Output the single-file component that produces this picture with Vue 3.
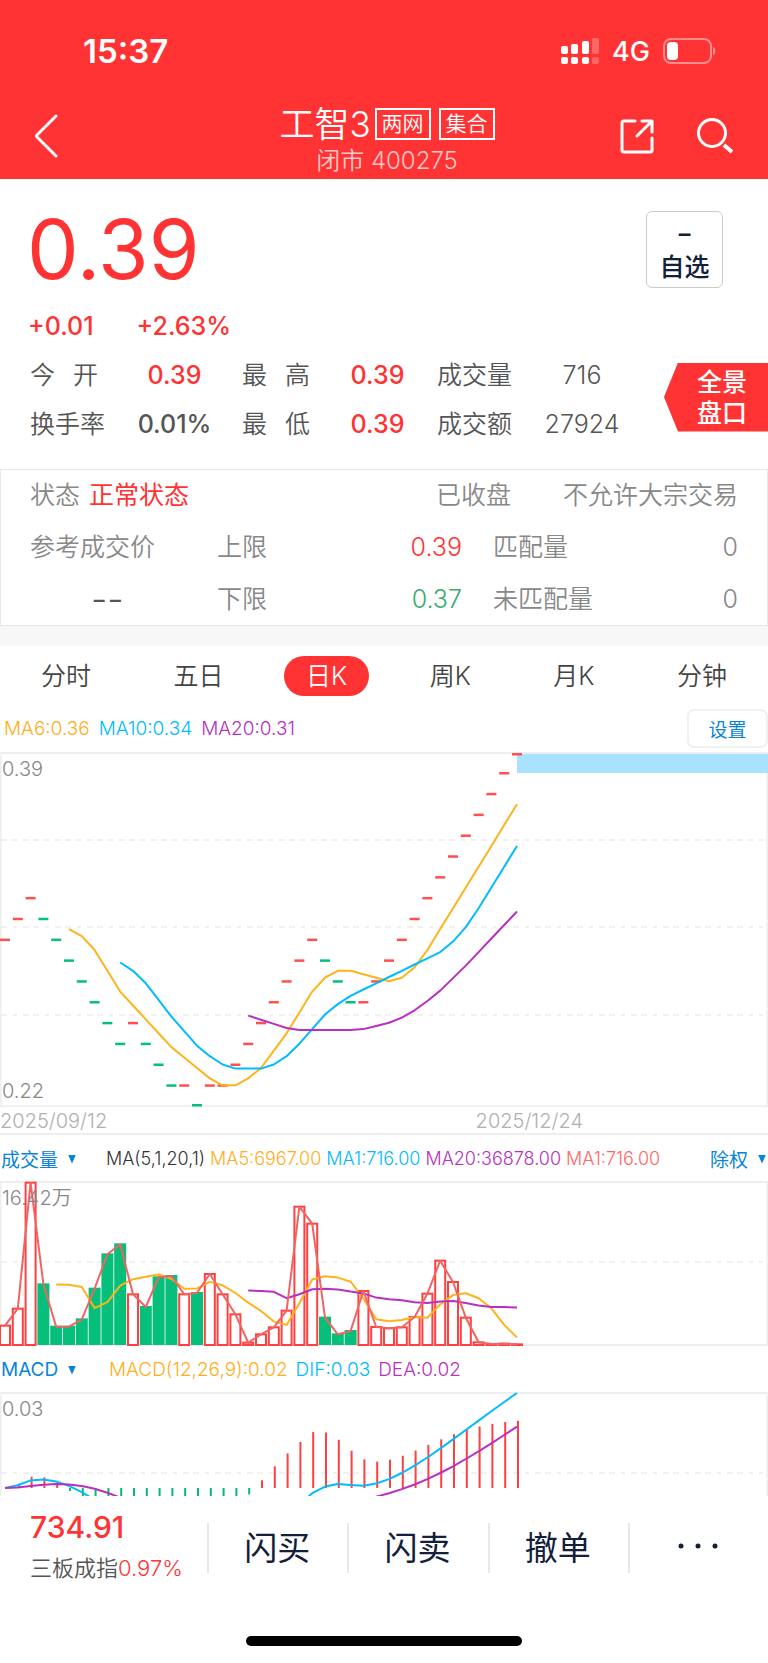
<script setup>
const STEP = 12.8
const x = (i) => 5 + STEP * i

const closes = [
  0.3, 0.31, 0.32, 0.31, 0.3, 0.29, 0.28, 0.27, 0.26, 0.25, 0.26, 0.25, 0.24, 0.23, 0.23, 0.22, 0.23, 0.23, 0.24, 0.25,
  0.26, 0.27, 0.28, 0.29, 0.3, 0.29, 0.28, 0.27, 0.27, 0.28, 0.29, 0.3, 0.31, 0.32, 0.33, 0.34, 0.35, 0.36, 0.37, 0.38, 0.39,
]
const fallingDays = new Set([3, 4, 5, 6, 7, 8, 9, 11, 12, 13, 15, 25, 26, 27])

const movingAverage = (data, n) =>
  data.map((_, i) => (i < n - 1 ? null : data.slice(i - n + 1, i + 1).reduce((a, b) => a + b, 0) / n))
const toPoints = (data, y) =>
  data
    .map((v, i) => (v === null ? null : `${x(i).toFixed(1)},${y(v).toFixed(1)}`))
    .filter(Boolean)
    .join(' ')

// Daily price
const priceY = (v) => Math.min(353, Math.max(2, 21 + (0.38 - v) * 2082))
const candles = closes.map((v, i) => ({ x: x(i) - 5, y: priceY(v) - 1, down: fallingDays.has(i) }))
const ma6 = toPoints(movingAverage(closes, 6), priceY)
const ma10 = toPoints(movingAverage(closes, 10), priceY)
const ma20 = toPoints(movingAverage(closes, 20), priceY)

// Volume
const volumes = [
  58, 109, 487, 182, 55, 55, 77, 169, 272, 302, 152, 114, 203, 207, 152, 156, 213, 152, 92, 7, 32, 53, 103, 415, 364, 82,
  32, 42, 162, 54, 50, 53, 84, 154, 253, 189, 82, 8, 3, 4, 2,
]
const volumeY = (v) => 163 - v / 3
const bars = volumes.map((v, i) => ({ x: x(i) - 5, y: volumeY(v), h: v / 3, down: fallingDays.has(i) }))
const vol1 = toPoints(volumes, (v) => volumeY(v) + 1)
const vol5 = toPoints(movingAverage(volumes, 5), volumeY)
const vol20 = toPoints(movingAverage(volumes, 20), volumeY)

// MACD
const ema = (data, n) => {
  let prev = data[0]
  return data.map((v) => (prev = prev + (2 / (n + 1)) * (v - prev)))
}
const slow = ema(closes, 26)
const dif = ema(closes, 12).map((v, i) => v - slow[i])
const dea = ema([0, ...dif], 9).slice(1)
const macdScale = 95 / Math.max(...dif)
const macdY = (v) => 96 - v * macdScale
const difLine = toPoints(dif, macdY)
const deaLine = toPoints(dea, macdY)
const sticks = dif.map((v, i) => ({ x: x(i) + 1, y: macdY(2 * (v - dea[i])), down: v < dea[i] }))

const tabs = ['分时', '五日', '日K', '周K', '月K', '分钟']
const active = '日K'
</script>

<template>
  <div class="page">
    <header class="top">
      <div class="status">
        <span class="clock">15:37</span>
        <div class="signals">
          <svg width="40" height="28" viewBox="0 0 40 28" fill="#fff" aria-hidden="true">
            <rect x="1" y="9" width="7" height="8" rx="2" />
            <rect x="11" y="7" width="7" height="10" rx="2" />
            <rect x="22" y="4" width="7" height="13" rx="2" />
            <rect x="32" y="1" width="7" height="16" rx="2" opacity=".25" />
            <rect x="1" y="20" width="7" height="7" rx="2" />
            <rect x="11" y="20" width="7" height="7" rx="2" />
            <rect x="22" y="20" width="7" height="7" rx="2" />
            <rect x="32" y="20" width="7" height="7" rx="2" opacity=".25" />
          </svg>
          <span class="net">4G</span>
          <svg width="56" height="28" viewBox="0 0 56 28" aria-hidden="true">
            <rect x="2" y="2" width="47" height="24" rx="7" fill="none" stroke="#fff" stroke-opacity=".45" stroke-width="2" />
            <path d="M51 10c3 1 3 7 0 8z" fill="#fff" opacity=".5" />
            <rect x="5" y="5" width="11" height="18" rx="4" fill="#fff" />
          </svg>
        </div>
      </div>
      <nav class="bar">
        <button class="icon" aria-label="返回">
          <svg width="26" height="46" viewBox="0 0 26 46" fill="none" stroke="#fff" stroke-width="3" stroke-linecap="round" stroke-linejoin="round">
            <path d="M22 3 3 22q-1 1 0 2l19 19" />
          </svg>
        </button>
        <div class="title">
          <h1>工智3 <span class="tag">两网</span><span class="tag">集合</span></h1>
          <p>闭市 400275</p>
        </div>
        <div class="actions">
          <button class="icon" aria-label="分享">
            <svg width="34" height="36" viewBox="0 0 34 36" fill="none" stroke="#fff" stroke-width="3" stroke-linecap="round" stroke-linejoin="round">
              <path d="M15 3H4a2 2 0 0 0-2 2v27a2 2 0 0 0 2 2h26a2 2 0 0 0 2-2V20M22 3h10v11M31 4 17 18" />
            </svg>
          </button>
          <button class="icon" aria-label="搜索">
            <svg width="38" height="38" viewBox="0 0 38 38" fill="none" stroke="#fff" stroke-width="3">
              <circle cx="16" cy="16" r="13.500" />
              <path d="m28 28 8 7" stroke-width="4" />
            </svg>
          </button>
        </div>
      </nav>
    </header>

    <section class="quote">
      <div class="price-row">
        <strong class="price">0.39</strong>
        <button class="fav"><span>−</span><span>自选</span></button>
      </div>
      <p class="change"><span>+0.01</span><span>+2.63%</span></p>
      <div class="stats">
        <dl>
          <dt class="two"><span>今</span><span>开</span></dt><dd class="red">0.39</dd>
          <dt class="two"><span>最</span><span>高</span></dt><dd class="red">0.39</dd>
          <dt>成交量</dt><dd class="thin">716</dd>
          <dt>换手率</dt><dd>0.01%</dd>
          <dt class="two"><span>最</span><span>低</span></dt><dd class="red">0.39</dd>
          <dt>成交额</dt><dd class="thin">27924</dd>
        </dl>
        <button class="panorama"><span>全景</span><span>盘口</span></button>
      </div>
    </section>

    <section class="state">
      <div class="line first">
        <span>状态 <b>正常状态</b></span>
        <span class="end"><span>已收盘</span><span>不允许大宗交易</span></span>
      </div>
      <div class="line cells">
        <span>参考成交价</span><span>上限</span><span class="num up">0.39</span><span class="gap">匹配量</span><span class="num">0</span>
      </div>
      <div class="line cells">
        <span class="dashes">--</span><span>下限</span><span class="num down">0.37</span><span class="gap">未匹配量</span><span class="num">0</span>
      </div>
    </section>

    <nav class="tabs">
      <button v-for="t in tabs" :key="t" :class="{ on: t === active }">{{ t }}</button>
    </nav>

    <div class="legend main-legend">
      <span class="orange">MA6:0.36</span><span class="blue">MA10:0.34</span><span class="purple">MA20:0.31</span>
      <button class="set">设置</button>
    </div>

    <div class="chart">
      <span class="label">0.39</span>
      <span class="label low">0.22</span>
      <svg viewBox="0 0 768 355">
        <g class="grid"><path d="M1 88H763M1 175H763M1 263H763" /></g>
        <path class="frame" d="M0 1H768M0 354.500H768M.5 0V355M767.500 0V355" />
        <rect x="517" y="2" width="251" height="19" fill="#a9e2ff" />
        <rect v-for="(c, i) in candles" :key="i" :x="c.x" :y="c.y" width="10" height="2.500" :class="c.down ? 'green-fill' : 'red-fill'" />
        <polyline class="ma orange-line" :points="ma6" />
        <polyline class="ma blue-line" :points="ma10" />
        <polyline class="ma purple-line" :points="ma20" />
      </svg>
    </div>
    <div class="dates"><span>2025/09/12</span><span>2025/12/24</span></div>

    <div class="legend vol-legend">
      <button class="pick">成交量 <i></i></button>
      <span class="dark">MA(5,1,20,1)</span><span class="orange">MA5:6967.00</span><span class="blue">MA1:716.00</span>
      <span class="purple">MA20:36878.00</span><span class="salmon">MA1:716.00</span>
      <button class="pick right">除权 <i></i></button>
    </div>
    <div class="chart">
      <span class="label">16.42万</span>
      <svg viewBox="0 0 768 165">
        <g class="grid"><path d="M1 81H763" /></g>
        <path class="frame" d="M0 1H768M0 164H768M.5 0V165M767.500 0V165" />
        <g v-for="(b, i) in bars" :key="i">
          <rect v-if="b.down" :x="b.x - 1" :y="b.y" width="12" :height="b.h + 1" class="green-fill" />
          <rect v-else :x="b.x" :y="b.y + 1" width="10" :height="b.h" class="hollow" />
        </g>
        <polyline class="ma orange-line" :points="vol5" />
        <polyline class="ma purple-line" :points="vol20" />
        <polyline class="ma salmon-line" :points="vol1" />
      </svg>
    </div>

    <div class="legend macd-legend">
      <button class="pick">MACD <i></i></button>
      <span class="orange">MACD(12,26,9):0.02</span><span class="blue">DIF:0.03</span><span class="purple">DEA:0.02</span>
    </div>
    <div class="chart">
      <span class="label">0.03</span>
      <svg viewBox="0 0 768 104">
        <g class="grid"><path d="M1 81H763" /></g>
        <path class="frame" d="M0 1H768M.5 0V105M767.500 0V105" />
        <path v-for="(s, i) in sticks" :key="i" :d="`M${s.x} 96V${s.y}`" :class="s.down ? 'stick-down' : 'stick-up'" />
        <polyline class="ma blue-line" :points="difLine" />
        <polyline class="ma purple-line" :points="deaLine" />
      </svg>
    </div>

    <footer class="bottom">
      <div class="index"><strong>734.91</strong><span>三板成指<em>0.97%</em></span></div>
      <button>闪买</button>
      <button>闪卖</button>
      <button>撤单</button>
      <button aria-label="更多">
        <svg width="44" height="10" viewBox="0 0 44 10" fill="#12203a"><circle cx="5" cy="5" r="2.500" /><circle cx="22" cy="5" r="2.500" /><circle cx="39" cy="5" r="2.500" /></svg>
      </button>
    </footer>
    <div class="home"></div>
  </div>
</template>

<style>
body { margin: 0; background: #fff; }
</style>

<style scoped>
* { box-sizing: border-box; }
.page { font-family: Inter, "Noto Sans CJK SC", sans-serif; font-size: 25px; font-weight: 350; color: #555; background: #fff; }
button { font: inherit; color: inherit; background: none; border: 0; padding: 0; margin: 0; }
h1, p, dl, dd { margin: 0; }
svg { display: block; }
.top { background: #f33; color: #fff; height: 179px; }
.status { display: flex; justify-content: space-between; align-items: center; height: 102px; padding: 0 50px 0 83px; }
.clock { font-size: 33px; font-weight: 600; }
.signals { display: flex; align-items: center; }
.net { font-size: 27px; font-weight: 450; margin: 0 12px; }
.bar { display: flex; justify-content: space-between; align-items: center; height: 68px; padding: 0 34px; }
.bar > .icon, .actions { flex: 1; }
.title { text-align: center; padding: 10px 0 0 6px; }
h1 { display: flex; align-items: center; gap: 8px; font-size: 35px; line-height: 40px; font-weight: 350; }
.tag { font-size: 21px; line-height: 28px; border: 2px solid #fff; padding: 0 5px; }
.tag:first-of-type { margin-left: -4px; }
.title p { font-size: 24px; line-height: 34px; color: #ffc8c8; }
.actions { display: flex; justify-content: flex-end; align-items: center; gap: 42px; }
.price-row { display: flex; justify-content: space-between; padding: 32px 45px 0 27px; height: 120px; }
.price { font-size: 82px; line-height: 78px; font-weight: 400; color: #f33; }
.fav { display: flex; flex-direction: column; justify-content: center; width: 77px; height: 77px; border: 1px solid #ccc; border-radius: 6px; color: #12203a; font-weight: 500; line-height: 34px; }
.change { display: flex; gap: 43px; padding: 9px 28px 1px; line-height: 36px; font-size: 25px; font-weight: 450; color: #f33; }
.stats { display: flex; justify-content: space-between; align-items: center; margin-top: 6px; height: 98px; }
dl { display: grid; grid-template-columns: 77px 135px 76px 119px 80px 130px; line-height: 49px; padding-left: 30px; }
dd { text-align: center; font-size: 25px; font-weight: 450; }
dd.thin { font-weight: 350; }
.two { display: flex; justify-content: space-between; width: 68px; }
.red { color: #f33; }
.panorama { display: flex; flex-direction: column; width: 104px; height: 69px; margin-bottom: 6px; padding: 4px 0 2px 12px; background: #f33; color: #fff; font-weight: 500; line-height: 31px; clip-path: polygon(14px 0, 100% 0, 100% 100%, 14px 100%, 0 50%); }
.state { margin-top: 20px; padding: 0 29px; border: 1px solid #e8e8e8; color: #888; }
.line { display: flex; justify-content: space-between; line-height: 52px; }
.first { line-height: 51px; }
.line b { color: #f33; font-weight: 400; margin-left: 2px; }
.end { display: flex; gap: 52px; }
.cells { display: grid; grid-template-columns: 187px 120px 125px 1fr 60px; height: 52px; }
.num { text-align: right; font-size: 25px; }
.up { color: #f33; }
.down { color: #3aaa6e; }
.gap { padding-left: 31px; }
.dashes { padding-left: 61px; font-size: 36px; color: #555; }
.tabs { display: flex; justify-content: space-between; align-items: center; border-top: 20px solid #f7f7f7; padding: 0 41px; height: 79px; color: #444; }
.tabs button { line-height: 40px; }
.tabs .on { background: #f33; color: #fff; border-radius: 20px; padding: 0 22px; margin: 0 -22px; }
.legend { display: flex; align-items: center; gap: 7px; font-size: 19px; white-space: nowrap; }
.main-legend { height: 47px; padding-left: 4px; gap: 9px; }
.set { margin-left: auto; width: 81px; height: 39px; border: 2px solid #f0f0f0; border-radius: 7px; font-size: 19px; font-weight: 400; color: #0a84d8; }
.vol-legend { height: 46px; font-size: 18px; gap: 5px; }
.macd-legend { height: 46px; gap: 8px; }
.pick { display: flex; align-items: center; justify-content: space-between; width: 76px; margin-right: 25px; padding-left: 1px; font-size: 19px; font-weight: 400; color: #0a84d8; }
.pick i { width: 8px; height: 9px; margin-top: 2px; background: #0a84d8; clip-path: polygon(0 0, 100% 0, 50% 100%); }
.right { width: 56px; margin: 0 2px 0 auto; padding: 0; }
.orange { color: #ffae1a; }
.blue { color: #0bf; }
.purple { color: #b92fc0; }
.dark { color: #333; }
.salmon { color: #f66; }
.chart { position: relative; }
.chart svg { width: 100%; height: auto; }
.label { position: absolute; left: 2px; top: 5px; font-size: 20px; line-height: 24px; color: #888; }
.low { top: auto; bottom: 4px; }
.grid path { fill: none; stroke: #f1f1f1; stroke-width: 2; stroke-dasharray: 6 6 4 6 6 4; }
.frame { fill: none; stroke: #eee; stroke-width: 2; }
.red-fill { fill: #ff5050; }
.green-fill { fill: #06bf7a; }
.hollow { fill: #fff; stroke: #ff4040; stroke-width: 2; }
.ma { fill: none; stroke-width: 2; stroke-linejoin: round; }
.orange-line { stroke: #ffb31a; }
.blue-line { stroke: #0bf; }
.purple-line { stroke: #b92fc0; }
.salmon-line { stroke: #f06464; }
.stick-up { stroke: #ff4040; stroke-width: 2; }
.stick-down { stroke: #06b877; stroke-width: 2; }
.dates { display: flex; height: 28px; border-bottom: 2px solid #eee; font-size: 20px; line-height: 28px; color: #b0b0b0; }
.dates span:last-child { margin-left: auto; margin-right: 185px; }
.bottom { display: grid; grid-template-columns: 207px repeat(4, 1fr); align-items: center; height: 103px; background: #fff; }
.bottom button { display: flex; justify-content: center; align-items: center; height: 50px; padding: 0 2px 4px 0; border-left: 2px solid #e8e8e8; font-size: 33px; font-weight: 400; color: #12203a; }
.index { display: flex; flex-direction: column; gap: 5px; padding: 0 0 4px 30px; font-size: 22px; line-height: 32px; white-space: nowrap; }
.index strong { font-size: 30px; line-height: 40px; font-weight: 450; color: #f33; }
.index em { font-style: normal; color: #f33; }
.home { width: 36%; height: 10px; margin: 37px auto 17px; border-radius: 5px; background: #000; }
</style>
